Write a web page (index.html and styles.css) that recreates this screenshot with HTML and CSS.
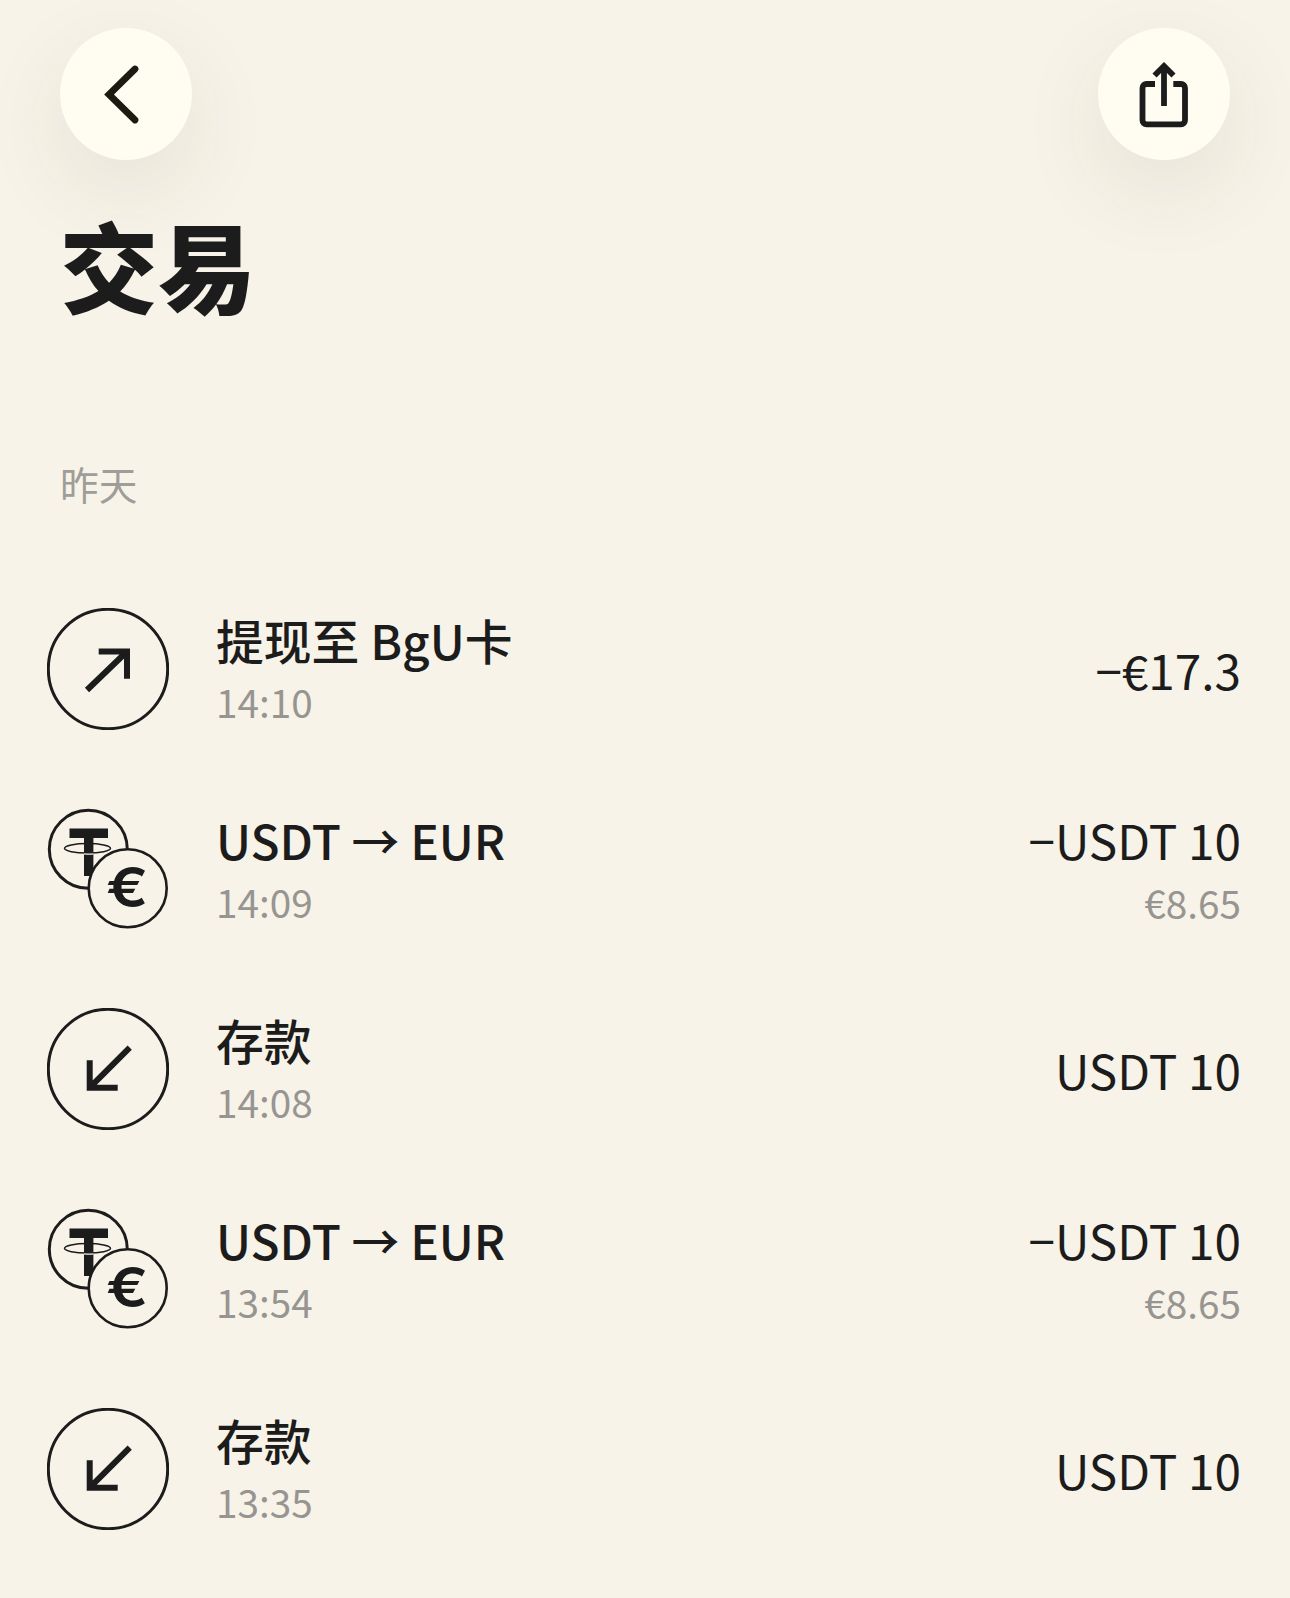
FILE: index.html
```html
<!DOCTYPE html>
<html lang="zh-CN">
<head>
<meta charset="utf-8">
<title>交易</title>
<link rel="stylesheet" href="styles.css">
</head>
<body>
<svg class="defs" width="0" height="0" aria-hidden="true">
  <defs>
    <g id="coins">
      <circle class="ring" cx="41.3" cy="41.3" r="39"/>
      <ellipse class="band" cx="40.5" cy="40.3" rx="23" ry="4.8"/>
      <path class="tee" d="M22.5 30V20.5H61V30H46.4V68H37V30Z"/>
      <path class="halo" d="M37 45.9Q41.7 46.3 46.4 45.9"/>
      <circle class="ring ring-front" cx="80.7" cy="80.3" r="39"/>
      <text class="euro" transform="translate(80.3 99.4) scale(1.14 1)" text-anchor="middle">€</text>
    </g>
  </defs>
</svg>
<main class="page">
  <header class="topbar">
    <button class="round-btn" type="button" aria-label="返回">
      <svg class="btn-icon" viewBox="0 0 132 132"><path class="chevron" d="M75 41L49 66.5L75 92"/></svg>
    </button>
    <button class="round-btn" type="button" aria-label="分享">
      <svg class="btn-icon" viewBox="0 0 132 132"><path class="share" d="M57 56H48.5a4 4 0 0 0-4 4V92.3a4 4 0 0 0 4 4H83a4 4 0 0 0 4-4V60a4 4 0 0 0-4-4H75.3M66 40V78M56.5 47.5L66 38L75.5 47.5"/></svg>
    </button>
  </header>
  <h1 class="title">交易</h1>
  <h2 class="day">昨天</h2>
  <ul class="list">
    <li class="row">
      <svg class="tx-icon" viewBox="0 0 122 122"><circle class="ring" cx="61" cy="61" r="59.7"/><path class="arrow" d="M40 82L80 43.5M51.7 43.5H80V70.7"/></svg>
      <div class="info"><div class="name">提现至 BgU卡</div><div class="sub">14:10</div></div>
      <div class="amounts amounts-solo"><div class="amount">−€17.3</div></div>
    </li>
    <li class="row">
      <svg class="tx-icon" viewBox="0 0 122 122"><use href="#coins"/></svg>
      <div class="info"><div class="name">USDT → EUR</div><div class="sub">14:09</div></div>
      <div class="amounts"><div class="amount">−USDT 10</div><div class="sub">€8.65</div></div>
    </li>
    <li class="row">
      <svg class="tx-icon" viewBox="0 0 122 122"><circle class="ring" cx="61" cy="61" r="59.7"/><path class="arrow" d="M82.7 39.7L42.7 79.7M42.7 52.3V79.7H70.7"/></svg>
      <div class="info"><div class="name">存款</div><div class="sub">14:08</div></div>
      <div class="amounts amounts-solo"><div class="amount">USDT 10</div></div>
    </li>
    <li class="row">
      <svg class="tx-icon" viewBox="0 0 122 122"><use href="#coins"/></svg>
      <div class="info"><div class="name">USDT → EUR</div><div class="sub">13:54</div></div>
      <div class="amounts"><div class="amount">−USDT 10</div><div class="sub">€8.65</div></div>
    </li>
    <li class="row">
      <svg class="tx-icon" viewBox="0 0 122 122"><circle class="ring" cx="61" cy="61" r="59.7"/><path class="arrow" d="M82.7 39.7L42.7 79.7M42.7 52.3V79.7H70.7"/></svg>
      <div class="info"><div class="name">存款</div><div class="sub">13:35</div></div>
      <div class="amounts amounts-solo"><div class="amount">USDT 10</div></div>
    </li>
  </ul>
</main>
</body>
</html>
```
FILE: styles.css
```css
* { box-sizing: border-box; }
html, body { margin: 0; padding: 0; }
body {
  background: #f7f3e8;
  color: #1c1c1c;
  font-family: "Noto Sans CJK SC", "Noto Sans", sans-serif;
  height: 1598px;
  overflow: hidden;
}
.defs { position: absolute; }
.page { display: flex; flex-direction: column; }
.topbar {
  display: flex;
  justify-content: space-between;
  padding: 28px 60px 0;
}
.round-btn {
  width: 132px;
  height: 132px;
  padding: 0;
  border: 0;
  border-radius: 50%;
  background: #fffcf1;
  box-shadow: 0 30px 90px rgba(70, 60, 30, 0.09);
}
.btn-icon { display: block; width: 132px; height: 132px; fill: none; }
.chevron { stroke: #1d1a12; stroke-width: 6.8; stroke-linecap: round; stroke-linejoin: miter; }
.share { stroke: #1c1c1c; stroke-width: 5.8; }
.title {
  margin: 33px 0 0 60px;
  font-size: 98px;
  line-height: 140px;
  font-weight: 900;
}
.day {
  margin: 122px 0 0 60px;
  font-size: 38.7px;
  line-height: 56px;
  font-weight: 400;
  color: #9f9d98;
}
.list { list-style: none; margin: 58px 0 0; padding: 0; }
.row {
  display: flex;
  align-items: center;
  height: 200px;
  padding: 0 49px 0 47px;
}
.tx-icon { flex: none; width: 122px; height: 122px; fill: none; }
.ring { fill: #f7f3e8; stroke: #1c1c1c; stroke-width: 3; }
.ring-front { stroke-width: 2.6; }
.tee { fill: #1c1c1c; }
.halo { fill: none; stroke: #f7f3e8; stroke-width: 1.2; }
.band { fill: none; stroke: #1c1c1c; stroke-width: 1.5; }
.euro { fill: #1c1c1c; font-family: "Inter", sans-serif; font-weight: 600; font-size: 55px; }
.arrow { fill: none; stroke: #1c1c1c; stroke-width: 6; }
.info { flex: 1; margin-left: 47px; padding-bottom: 2px; }
.info .sub { line-height: 56px; }
.name { font-size: 47.8px; line-height: 66px; font-weight: 500; }
.sub { font-size: 38.7px; line-height: 58px; color: #979592; }
.amounts { text-align: right; }
.amounts-solo { padding-top: 2px; }
.amount { font-size: 47.7px; line-height: 66px; }
```
